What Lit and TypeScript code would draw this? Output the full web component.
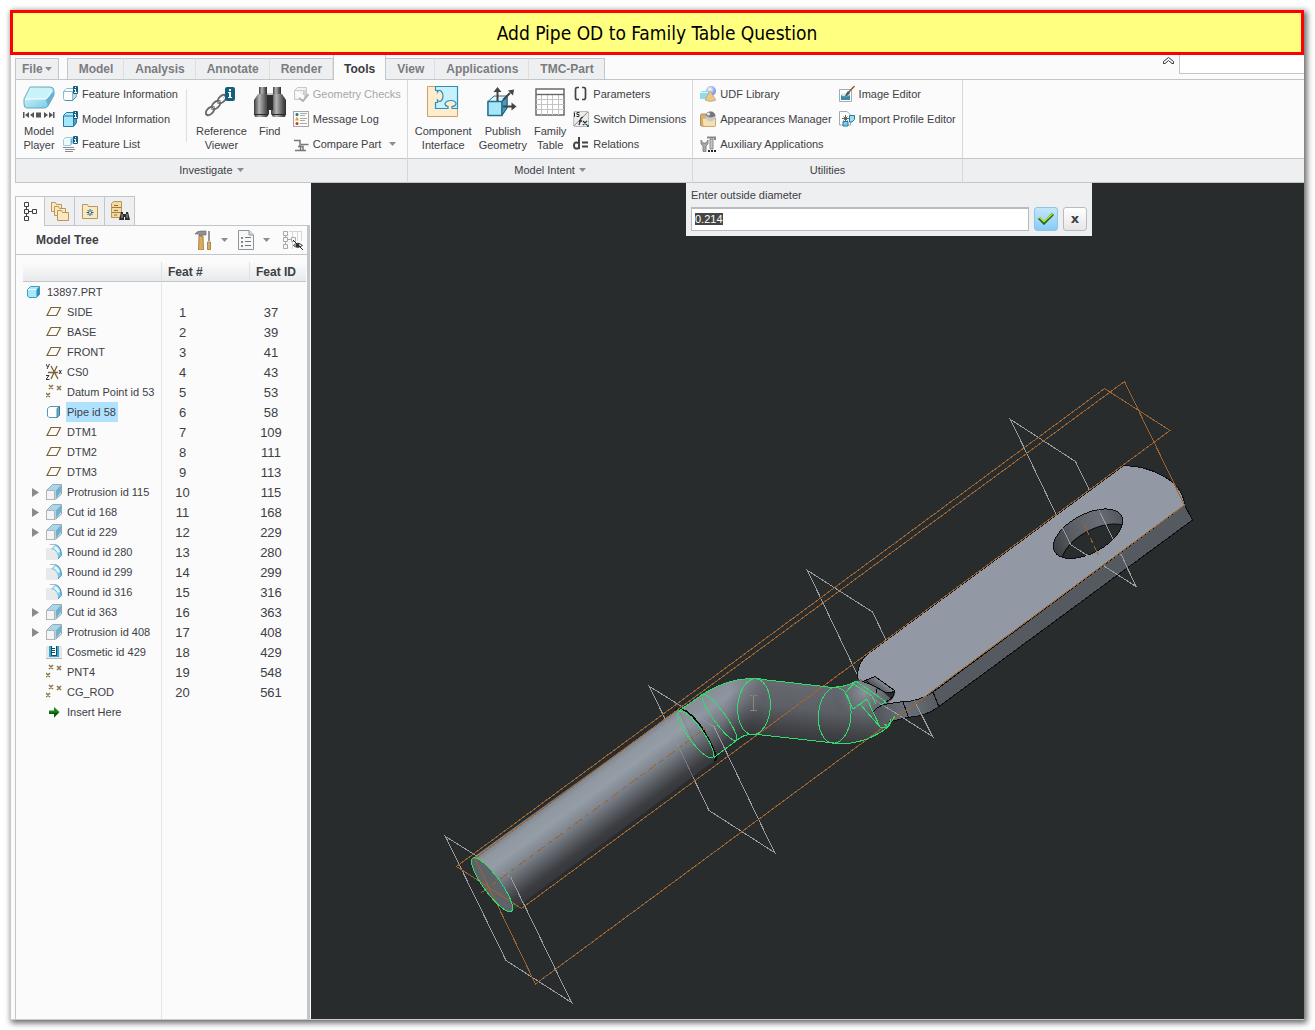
import { LitElement, html, svg, css, nothing } from "lit";
import type { SVGTemplateResult, TemplateResult } from "lit";
import { customElement, property, query, state } from "lit/decorators.js";
import { classMap } from "lit/directives/class-map.js";

/* ---------- icons ---------- */

const infoBadge = (x: number, y: number) => svg`
  <rect x=${x} y=${y} width="5" height="8" rx="1" fill="#15607f"></rect>
  <path d=${`M${x + 2} ${y + 1}h1v1h-1zM${x + 1} ${y + 3}h2v3h1v1h-3v-1h1v-2h-1z`} fill="#fff"></path>`;

const solid = svg`
  <path d="M1.500 5.500V12.500Q1.500 14.500 3.500 14.500H10.500L14.500 10.500V2.500H5.500Z" fill="#fff"></path>
  <path d="M10.500 14.500V5.500L14.500 2.500V10.500Z" fill="#b9dcec"></path>
  <path d="M1.500 5.500L4.500 2.500H14.500M10.500 14.500L14.500 10.500V2.500L10.500 5.500V14.500H3.500Q1.500 14.500 1.500 12.500V5.500H10.500" fill="none" stroke="#8dbccf"></path>
  <path d="M3 14.500H10.500L14.500 10.500" fill="none" stroke="#4a93b4"></path>`;

const cubeFeature = svg`
  <path d="M0.500 6.500L6.500 0.500H15.500V10.500L9.500 15.500H0.500Z" fill="#f1f5f7"></path>
  <path d="M1 6L6 1H15L10 6Z" fill="#a8d6ea"></path>
  <path d="M9.500 6.500L15.500 0.500V10L9.500 15.500Z" fill="#6fb1cf"></path>
  <path d="M10 14.500L15 8V10L10 15Z" fill="#c9ebf8"></path>
  <rect x="0.500" y="6.500" width="8" height="9" fill="#f4f4f4" stroke="#b4b4b4"></rect>
  <path d="M1 6L6.500 0.500H15.500V10L9.500 15.500" fill="none" stroke="#9aa9b1"></path>`;

const ICONS: Record<string, SVGTemplateResult> = {
  featureInfo: svg`${solid}${infoBadge(11, 0)}`,
  modelInfo: svg`
    <path d="M1.500 4.500L4.500 1.500H14.500V11.500L11.500 15.500H1.500Z" fill="#a5e6fa" stroke="#1f7ca6"></path>
    <path d="M11.500 15V5L14.500 2V11.500Z" fill="#48a3c6" stroke="#1f7ca6"></path>
    <path d="M1.500 5H11.500" stroke="#1f7ca6"></path>${infoBadge(11, 0)}`,
  featureList: svg`
    <path d="M1.500 3.500L3.500 1.500H10.500V7L8.500 9.500H1.500Z" fill="#eef9fc" stroke="#9ccbdd"></path>
    <path d="M8.500 9V3.500L10 2V7Z" fill="#5fb3d2"></path>
    ${infoBadge(11, 0)}
    <path d="M1 11.500H12M3 13.500H13M3 15.500H11" stroke="#8b8b8b"></path>`,
  modelPlayer: svg`
    <defs><linearGradient id="mp" x1="0" y1="0" x2="1" y2="1">
      <stop offset="0" stop-color="#e8fbff"></stop><stop offset="1" stop-color="#6cc8e4"></stop></linearGradient></defs>
    <path d="M7 1H27Q31 1 31 5V9L25 20Q24 22 21 22H4Q1 22 1 18V13Z" fill="url(#mp)" stroke="#6ba8bd"></path>
    <path d="M8 2H27Q30 2 28 6L24 13H2Z" fill="#c9f2fb"></path>
    <path d="M2 13H21Q24 13 25 11L29 4" stroke="#fff" fill="none"></path>
    <path d="M31 5V9L25 20L23 14Z" fill="#68b0cb"></path>
    <path d="M0 26h1.500v6H0zM6 26v6l-4-3zM11 26v6l-4-3zM13 26.500h5v5h-5zM21 26v6l4-3zM26 26v6l4-3zM30 26h1.500v6H30z" fill="#555"></path>`,
  reference: svg`
    <g fill="none" stroke="#6b6b6b" stroke-width="2">
      <ellipse cx="5" cy="25" rx="5" ry="3" transform="rotate(-45 5 25)"></ellipse>
      <ellipse cx="11" cy="19" rx="5" ry="3" transform="rotate(-45 11 19)"></ellipse>
      <ellipse cx="17" cy="13" rx="5" ry="3" transform="rotate(-45 17 13)"></ellipse>
    </g>
    <path d="M6 24l4-4M12 18l4-4M18 12l3-3" stroke="#bbb" stroke-width="1"></path>
    <rect x="20" y="1" width="10" height="14" rx="2" fill="#15607f"></rect>
    <path d="M24 3h2v2h-2zM23 6h3v5h1v1h-4v-1h1v-4h-1z" fill="#fff"></path>`,
  find: svg`
    <defs><linearGradient id="bn" x1="0" x2="1"><stop offset="0" stop-color="#3b3b3b"></stop>
      <stop offset=".35" stop-color="#b5b5b5"></stop><stop offset=".75" stop-color="#5c5c5c"></stop><stop offset="1" stop-color="#2c2c2c"></stop></linearGradient></defs>
    <rect x="5" y="1" width="8" height="7" fill="url(#bn)"></rect><rect x="19" y="1" width="8" height="7" fill="url(#bn)"></rect>
    <path d="M4 8H13L15 12V28L13 31H1L0 28V14Z" fill="url(#bn)"></path>
    <path d="M28 8H19L17 12V28L19 31H31L32 28V14Z" fill="url(#bn)"></path>
    <rect x="13" y="9" width="6" height="15" fill="#2f2f2f"></rect><path d="M13 8h6" stroke="#999"></path>
    <path d="M0 28.500H14M18 28.500H32" stroke="#2a2a2a"></path>`,
  geometry: svg`
    <path d="M1.500 4.500L4.500 1.500H13.500V9M1.500 4.500V13.500H6M1.500 4.500H10.500V9" fill="#f4f4f4" stroke="#c8c8c8"></path>
    <path d="M11 5L13.500 2V10L11 12Z" fill="#d2d2d2"></path>
    <path d="M6 12l4 3L15.500 8" stroke="#b0b0b0" stroke-width="2" fill="none"></path>`,
  message: svg`
    <rect x=".5" y=".5" width="15" height="15" fill="#fafafa" stroke="#a5a5a5"></rect>
    <circle cx="4" cy="3.500" r="1.500" fill="#1d7597"></circle><path d="M2 9.500l2-4 2 4z" fill="#e5a21c"></path>
    <circle cx="4" cy="12.500" r="1.500" fill="#c33b2b"></circle>
    <path d="M7 2.500h7M7 4.500h5M7 7.500h7M7 9.500h5M7 12.500h7" stroke="#aaa"></path>`,
  compare: svg`
    <path d="M1 4.500h6v6M2 14.500h11M7.500 10V14M5 10.500h5v4M8 8.500h7.500" fill="none" stroke="#777" stroke-width="1.500"></path>`,
  component: svg`
    <path d="M.5 .5H30.500V30.500H.5Z" fill="#fdecce" stroke="#c9a465"></path>
    <path d="M8.500 .5H30.500V22.500H25V20.500Q29 20 29 17.500Q28.500 14.500 24 14.500T18 17.500Q18 20 21 20.500V22.500H8.500V16.500H10.500V14Q12.500 16.500 14.500 14.500Q16 13 16 10T14 5Q12 3.500 10.500 6V4.500H8.500Z" fill="#c8f1fd" stroke="#2e8fb6" stroke-width="1.200"></path>`,
  publish: svg`
    <path d="M1 15.500L7 10H20V22L15 29.500H1Z" fill="#dff7fd" stroke="#2d6d87"></path>
    <path d="M1 15.500H15V29.500H1Z" fill="#a4e7fa" stroke="#2d6d87" stroke-width="1.400"></path>
    <path d="M15 15L20 10V22L15 29Z" fill="#3e9fc8" stroke="#23576c"></path>
    <path d="M10.500 15V4M16 14L23 7M16 20.500H25" stroke="#444" stroke-width="2"></path>
    <path d="M10.500 1l4 5h-8zM27 3.500l-1 6-5-5zM29.500 20.500l-5 4v-8z" fill="#444"></path>`,
  family: svg`
    <rect x="1" y="3" width="28" height="26" fill="#fff" stroke="#5f5f5f" stroke-width="1.400"></rect>
    <path d="M1 13.500H29M1 18.500H29M1 23.500H29M6.500 9V29M12.500 9V29M17.500 9V29M23.500 9V29" stroke="#c4c4c4"></path>
    <path d="M1 8.500H29" stroke="#666" stroke-width="1.400"></path>`,
  parameters: svg`<path d="M6 1.500H4Q2.500 1.500 2.500 4V11Q2.500 13.500 4 13.500H6M9 1.500H11Q12.500 1.500 12.500 4V11Q12.500 13.500 11 13.500H9" fill="none" stroke="#444" stroke-width="1.700"></path>`,
  switchDim: svg`
    <path d="M.5 15L15 .5H1ZM15.500 1V15.500H1" fill="#ececec" stroke="#b9b9b9"></path>
    <path d="M1.500 1.500V6M6.500 1.500H4V3.500H6V5.500H3.500" stroke="#333" fill="none"></path>
    <path d="M1 15L15 1" stroke="#999"></path>
    <path d="M10 6.500Q8 6 7.500 9L6 14M6 10h3M10 10l4 4M14 10l-4 4" stroke="#333" stroke-width="1.300" fill="none"></path>
    <rect x="14" y="14" width="2" height="2" fill="#13708f"></rect>`,
  relations: svg`<path d="M6 1V13M6 7Q1 5 1 9.500T6 12M9 6.500h6M9 10.500h6" fill="none" stroke="#444" stroke-width="2"></path>`,
  udf: svg`
    <defs><radialGradient id="ub" cx=".4" cy=".35"><stop offset="0" stop-color="#fff"></stop><stop offset="1" stop-color="#8b9be0"></stop></radialGradient></defs>
    <circle cx="11" cy="5" r="5" fill="url(#ub)"></circle>
    <path d="M0 6.500L2 5H9V13H0Z" fill="#8fdbea"></path><path d="M0 6.500H8" stroke="#d9f6fb"></path>
    <path d="M10 5L16 14Q11 17 5 14Z" fill="#e8c98c" stroke="#b6935a" stroke-width=".6"></path>`,
  appearance: svg`
    <path d="M.5 4.500Q.5 3 2 3H6V15H2Q.5 15 .5 14Z" fill="#d6b06c" stroke="#b08c4d"></path>
    <path d="M2 7H15.500V14.500Q15.500 15.500 14 15.500H3Z" fill="#f5e0b5" stroke="#cda763"></path>
    <circle cx="10.500" cy="5.500" r="5" fill="#c9c9c9"></circle><path d="M6 4.500Q10 8 15.500 5Q14.500 0 10 .5Q6 1 6 4.500Z" fill="#777"></path>
    <circle cx="8.500" cy="3" r="1.500" fill="#eee"></circle>`,
  auxiliary: svg`
    <path d="M1 4v4l2 2v5.500h3V10l2-2V4L6 7H3Z" fill="#aaa" stroke="#777" stroke-width=".8"></path>
    <path d="M7 1.500H15V4" stroke="#888" stroke-width="2" fill="none"></path>
    <path d="M10 3h3v10h-3z" fill="#c5c5c5" stroke="#777" stroke-width=".8"></path>
    <path d="M8 14h2v2H8zM11 14h2v2h-2zM14 14h2v2h-2z" fill="#222"></path>`,
  image: svg`
    <path d="M.5 3.500H12.500V15.500H.5Z" fill="#fff" stroke="#a9a9a9"></path>
    <path d="M2 9H11V14H2Z" fill="#3d89ab"></path><path d="M2 9Q6 12 11 9V6L2 8Z" fill="#cdeaf5"></path>
    <path d="M15.500 0L9 7" stroke="#8b5a3c" stroke-width="1.500"></path><path d="M9 5l2 2-3 3-3 1q2-2 2-3z" fill="#555"></path>`,
  profile: svg`
    <path d="M.5 .5H8L11.500 4V14H.5Z" fill="#fff" stroke="#a9a9a9"></path>
    <path d="M3 7.500h7M6.500 4v7M4.500 5.500l4 4M8.500 5.500l-4 4" stroke="#555" stroke-width=".9"></path>
    <path d="M10.500 4.500h5v4L13 11h-2.500z" fill="#9edcf1" stroke="#1f7ca6"></path><path d="M4 10.500h5V15H4z" fill="#7ccbe8" stroke="#1f7ca6"></path>`,
  tabTree: svg`<path d="M2.500 .5h4v4h-4zM2.500 7.500h4v4h-4zM2.500 14.500h4v4h-4zM10.500 7.500h4v4h-4zM4.500 4.500v3M4.500 11.500v3M6.500 9.500h4" fill="none" stroke="#3e3e3e"></path>`,
  tabFolders: svg`
    <g fill="#fbe8c3" stroke="#bd9655"><path d="M1.500 1.500h4l1 2h5v7h-10z"></path><path d="M4.500 5.500h4l1 2h6v7h-11z"></path><path d="M7.500 9.500h4l1 2h6v8h-11z"></path></g>`,
  tabFav: svg`<path d="M1.500 3.500h5l1 2h9v12h-15z" fill="#fbe8c3" stroke="#bd9655"></path>
    <path d="M9 8v7M5.500 11.500h7M6.500 9l5 5M11.500 9l-5 5" stroke="#17607f"></path><circle cx="9" cy="11.500" r="1" fill="#fff"></circle>`,
  tabSearch: svg`<path d="M1.500 2.500L3.500 .5h8v14l-1 2h-9z" fill="#f3d9a4" stroke="#bd9655"></path>
    <path d="M2 6.500h9M2 11.500h9" stroke="#a47e3c"></path><path d="M4 4.500h4M4 9.500h4M4 14h3" stroke="#94702f"></path>
    <path d="M11 11h2v2h3v-2h2l2 8h-5v-3h-1v3H9z" fill="#2d2d2d"></path><path d="M12 13v4M17 13v4" stroke="#aaa"></path>`,
  tools: svg`
    <path d="M0 4Q2 1 6 1h5v4H7v1H4V4Z" fill="#8f9296" stroke="#5f6266" stroke-width=".6"></path>
    <path d="M4 6h4l.5 14h-5z" fill="#dcab5f" stroke="#9c7435" stroke-width=".8"></path>
    <path d="M14 1v10" stroke="#777" stroke-width="1.500"></path><path d="M12.500 12h3v7.500h-3z" fill="#dcab5f" stroke="#9c7435" stroke-width=".8"></path>`,
  list: svg`<path d="M.5 .5H11L15.500 5V19.500H.5Z" fill="#f6f7f8" stroke="#8e9499"></path><path d="M11 .5V5h4.500" fill="#d6dadd" stroke="#8e9499"></path>
    <path d="M7 7.500h6M7 11.500h6M7 15.500h6" stroke="#777"></path><path d="M3 7h2v2H3zM3 11h2v2H3zM3 15h2v2H3z" fill="#888"></path>`,
  hideTree: svg`<path d="M.5 1.500h4v4h-4zM.5 7.500h4v4h-4zM.5 14.500h4v4h-4zM8.500 7.500h4v4h-4zM2.500 5.500v2M2.500 11.500v3M4.500 9.500h4" fill="none" stroke="#a8a8a8"></path>
    <path d="M6 1.500h13M9.500 2v5M14.500 2v9M18.500 2v9M9.500 12v7" stroke="#d5d5d5"></path>
    <path d="M10.500 15.500Q14.500 11 19.500 15.500Q14.500 19 10.500 15.500Z" fill="#fff" stroke="#333"></path><circle cx="14.500" cy="15.500" r="2" fill="#333"></circle>
    <path d="M10 10l10 10" stroke="#222"></path>`,
  part: svg`<path d="M1.500 5.500L4.500 2.500H13.500V10.500L10.500 13.500H3L1.500 12Z" fill="#a8e8fb" stroke="#3c9dc3"></path>
    <path d="M10.500 13V5.500L13.500 2.500V10.500Z" fill="#2f8fba"></path><path d="M2 5.500H10.500" stroke="#e9fbff"></path>`,
  plane: svg`<path d="M5 3.500H14.500L10.500 11.500H1Z" fill="none" stroke="#7d6233" stroke-width="1.200"></path>`,
  csys: svg`<path d="M5 2l7 13M11 2L5 15M2 8.500h10" stroke="#7d6233" stroke-width="1.300"></path>
    <path d="M0 0l1.500 3M3.500 0L1 5M0 11.500h3l-3 4h3.500M13 6l2.500 4M15.500 6L13 10" stroke="#333" fill="none"></path>`,
  points: svg`<path d="M3 1l4 4M7 1l-4 4M11 2l4 4M15 2l-4 4M0 9l4 4M4 9l-4 4" stroke="#8c7448" stroke-width="1.500"></path>`,
  pipe: svg`<path d="M1.500 4.500L4 2.500H13.500V11L11 13.500H3L1.500 12Z" fill="#fff" stroke="#4d9ab9"></path>
    <path d="M11 13.500V4.500L13.500 2.500V11Z" fill="#6bb5d4" stroke="#2b6f8d" stroke-width=".8"></path>`,
  cube: cubeFeature,
  round: svg`
    <path d="M0 4H6Q12 6 12 16H0Z" fill="#e9e9e9"></path>
    <path d="M5 5L9 1Q15 2 15.500 11L12 15Q12 6 5 5Z" fill="#7cc8e8"></path>
    <path d="M7 4L10 2Q13 4 14 8L12 9Q10 5 7 4Z" fill="#e2f5fd"></path>
    <path d="M9 .5Q15 2 15.500 11M12 15L15.500 11" stroke="#3f8db0" fill="none"></path>
    <path d="M4 .5H10" stroke="#b4b4b4"></path>`,
  cosmetic: svg`<rect x="0" y="2" width="16" height="12" fill="#e6e6e6"></rect><path d="M3 2h10v11H3z" fill="#35a6cd"></path>
    <path d="M6 2h4v9H6z" fill="#fff"></path><path d="M5.500 2v9.500h5V2M6 4.500h3M6 6.500h3M6 8.500h3" fill="none" stroke="#0f4d66"></path><path d="M0 14.500h16" stroke="#b9b9b9"></path>`,
  insert: svg`<path d="M3 6.500h5V3l5.500 5L8 13.500V10H3Z" fill="#0c8a12"></path><path d="M3 8.500h10L8 13.500V10H3Z" fill="#174f1a"></path>`,
};

const icon = (name: string, w = 16, h = w) =>
  html`<svg class="icon" width=${w} height=${h} viewBox=${`0 0 ${w} ${h}`} aria-hidden="true">${ICONS[name]}</svg>`;

const caret = html`<svg class="caret" width="7" height="4" viewBox="0 0 7 4" aria-hidden="true"><path d="M0 0H7L3.500 4Z" fill="#8a8c8f"></path></svg>`;

const shared = css`
  * { box-sizing: border-box; }
  button {
    border: 0; padding: 0; margin: 0; background: none; font: inherit; color: inherit; cursor: default;
  }
  svg { display: block; flex: none; }
`;

/* ---------- ribbon ---------- */

interface Command { icon: string; label: string; disabled?: boolean; menu?: boolean }

const TABS = ["Model", "Analysis", "Annotate", "Render", "Tools", "View", "Applications", "TMC-Part"];

@customElement("ribbon-bar")
class RibbonBar extends LitElement {
  static styles = [shared, css`
    :host { display: block; color: #3d4045; font: 11px/14px "Liberation Sans", Arial, sans-serif; }
    .tabs {
      display: flex; align-items: flex-end; height: 25px; margin-left: 4px;
      border-bottom: 1px solid #c3c6c9; font-size: 12px; font-weight: bold; color: #7a7c80;
    }
    .tab, .file {
      display: flex; align-items: center; gap: 3px; height: 21px; padding: 0 10px 0 11px;
      background: #eeeff1; border-top: 1px solid #c3c6c9; border-right: 1px solid #dcdee0;
    }
    .file { gap: 2px; padding: 0 6px; border-left: 1px solid #c3c6c9; border-right-color: #c3c6c9; margin-right: 8px; }
    .tab:first-child { border-left: 1px solid #c3c6c9; }
    .tab:last-child { border-right-color: #c3c6c9; }
    .strip { display: flex; align-items: flex-end; }
    .tab.active {
      height: 25px; margin-bottom: -1px; padding: 2px 10px 0; background: #fbfbfb; color: #3a3b3d;
      border-top: 0; border-left: 1px solid #c3c6c9; border-right-color: #c3c6c9;
    }
    .spacer { flex: 1; }
    .collapse { align-self: flex-start; margin: 2px 5px 0 0; }
    .searchbox { align-self: flex-start; width: 125px; height: 19px; background: #fff; border: solid #c3c6c9; border-width: 0 0 1px 1px; }
    .groups { display: flex; margin-left: 4px; border-left: 1px solid #c3c6c9; }
    .group { display: flex; flex-direction: column; border-right: 1px solid #d5d8da; }
    .rest { flex: 1; border-right: 0; }
    .body { display: flex; gap: 7px; height: 78px; padding: 1px 6px 0 7px; }
    .title {
      display: flex; align-items: center; justify-content: center; gap: 4px; height: 25px; padding-bottom: 1px;
      background: #eeeff1; border: solid #c3c6c9; border-width: 1px 0;
    }
    .column { display: flex; flex-direction: column; }
    .command { display: flex; align-items: center; gap: 4px; height: 25px; white-space: nowrap; text-align: left; }
    .command .caret { margin-left: 4px; }
    .command:disabled { color: #a5a7aa; }
    .big { display: flex; flex-direction: column; align-items: center; gap: 6px; padding-top: 5px; text-align: center; white-space: pre-line; align-self: flex-start; }
    .rule { width: 1px; margin: 8px 2px 16px 1px; background: #dcdee0; }
  `];

  private command(c: Command) {
    return html`<button class="command" ?disabled=${c.disabled}>
      ${icon(c.icon)}<span>${c.label}</span>${c.menu ? caret : nothing}
    </button>`;
  }

  private column(...items: Command[]) {
    return html`<div class="column">${items.map((c) => this.command(c))}</div>`;
  }

  private big(name: string, label: string, width = 32) {
    return html`<button class="big">${icon(name, width, 32)}<span>${label}</span></button>`;
  }

  private group(title: string, menu: boolean, content: TemplateResult) {
    return html`<section class="group" aria-label=${title}>
      <div class="body">${content}</div>
      <div class="title"><span>${title}</span>${menu ? caret : nothing}</div>
    </section>`;
  }

  render() {
    return html`
      <nav class="tabs" aria-label="Ribbon">
        <button class="file"><span>File</span>${caret}</button>
        <div class="strip">
          ${TABS.map((t) => html`<button class=${classMap({ tab: true, active: t === "Tools" })}>${t}</button>`)}
        </div>
        <div class="spacer"></div>
        <button class="collapse" aria-label="Minimize the ribbon">
          <svg width="11" height="7" viewBox="0 0 11 7"><path d="M.5 4.500L5.500 .5L10.500 4.500V6.500H9L5.500 3.500L2 6.500H.5Z" fill="#fff" stroke="#333"></path></svg>
        </button>
        <div class="searchbox"></div>
      </nav>
      <div class="groups">
        ${this.group("Investigate", true, html`
          ${this.big("modelPlayer", "Model\nPlayer")}
          ${this.column(
            { icon: "featureInfo", label: "Feature Information" },
            { icon: "modelInfo", label: "Model Information" },
            { icon: "featureList", label: "Feature List" })}
          <div class="rule"></div>
          ${this.big("reference", "Reference\nViewer")}
          ${this.big("find", "Find")}
          ${this.column(
            { icon: "geometry", label: "Geometry Checks", disabled: true },
            { icon: "message", label: "Message Log" },
            { icon: "compare", label: "Compare Part", menu: true })}`)}
        ${this.group("Model Intent", true, html`
          ${this.big("component", "Component\nInterface")}
          ${this.big("publish", "Publish\nGeometry")}
          ${this.big("family", "Family\nTable", 30)}
          ${this.column(
            { icon: "parameters", label: "Parameters" },
            { icon: "switchDim", label: "Switch Dimensions" },
            { icon: "relations", label: "Relations" })}`)}
        ${this.group("Utilities", false, html`
          ${this.column(
            { icon: "udf", label: "UDF Library" },
            { icon: "appearance", label: "Appearances Manager" },
            { icon: "auxiliary", label: "Auxiliary Applications" })}
          ${this.column(
            { icon: "image", label: "Image Editor" },
            { icon: "profile", label: "Import Profile Editor" })}`)}
        <div class="group rest"><div class="body"></div><div class="title"></div></div>
      </div>`;
  }
}

/* ---------- model tree ---------- */

interface Feature { icon: string; name: string; num?: number; id?: number; expandable?: boolean }

const FEATURES: Feature[] = [
  { icon: "plane", name: "SIDE", num: 1, id: 37 },
  { icon: "plane", name: "BASE", num: 2, id: 39 },
  { icon: "plane", name: "FRONT", num: 3, id: 41 },
  { icon: "csys", name: "CS0", num: 4, id: 43 },
  { icon: "points", name: "Datum Point id 53", num: 5, id: 53 },
  { icon: "pipe", name: "Pipe id 58", num: 6, id: 58 },
  { icon: "plane", name: "DTM1", num: 7, id: 109 },
  { icon: "plane", name: "DTM2", num: 8, id: 111 },
  { icon: "plane", name: "DTM3", num: 9, id: 113 },
  { icon: "cube", name: "Protrusion id 115", num: 10, id: 115, expandable: true },
  { icon: "cube", name: "Cut id 168", num: 11, id: 168, expandable: true },
  { icon: "cube", name: "Cut id 229", num: 12, id: 229, expandable: true },
  { icon: "round", name: "Round id 280", num: 13, id: 280 },
  { icon: "round", name: "Round id 299", num: 14, id: 299 },
  { icon: "round", name: "Round id 316", num: 15, id: 316 },
  { icon: "cube", name: "Cut id 363", num: 16, id: 363, expandable: true },
  { icon: "cube", name: "Protrusion id 408", num: 17, id: 408, expandable: true },
  { icon: "cosmetic", name: "Cosmetic id 429", num: 18, id: 429 },
  { icon: "points", name: "PNT4", num: 19, id: 548 },
  { icon: "points", name: "CG_ROD", num: 20, id: 561 },
  { icon: "insert", name: "Insert Here" },
];

@customElement("model-tree")
class ModelTree extends LitElement {
  static styles = [shared, css`
    :host { display: flex; flex-direction: column; padding: 13px 1px 0 4px; color: #3d4045; font: 11px/14px "Liberation Sans", Arial, sans-serif; }
    .tabs { display: flex; height: 29px; position: relative; }
    .tab {
      display: flex; align-items: center; justify-content: center; width: 30px;
      background: #eeeff1; border: solid #c3c6c9; border-width: 1px 1px 0 0;
    }
    .tab.active { background: #fbfbfb; border-left-width: 1px; margin-bottom: -1px; z-index: 1; }
    .panel { flex: 1; display: flex; flex-direction: column; border: solid #c3c6c9; border-width: 1px 3px 0 1px; }
    .heading { display: flex; align-items: center; height: 29px; padding: 0 4px 0 20px; border-bottom: 1px solid #c3c6c9; }
    .heading h2 { flex: 1; margin: 0; font-size: 12px; }
    .tool { display: flex; align-items: center; gap: 9px; margin-right: 10px; }
    .tool.last { margin: 0 0 0 3px; }
    .scroll { flex: 1; display: flex; flex-direction: column; padding: 7px 1px 0 7px; }
    .scroll::after { content: ""; flex: 1; margin-left: 138px; border-left: 1px solid #e4e6e8; }
    table { width: 100%; border-collapse: separate; border-spacing: 0; table-layout: fixed; }
    col.name { width: 138px; } col.num { width: 88px; }
    th { height: 20px; padding: 0 0 0 6px; text-align: left; font-size: 12px; background: linear-gradient(#fbfbfb, #e8eaec); border-bottom: 1px solid #c3c6c9; }
    th + th { border-left: 1px solid #e0e2e4; }
    td { height: 20px; padding: 0; white-space: nowrap; }
    td.value { font-size: 13px; text-align: center; padding-top: 1px; }
    td.num { padding-right: 46px; border-left: 1px solid #e4e6e8; }
    td.id { padding-right: 13px; }
    .node { display: flex; align-items: center; gap: 4px; height: 20px; padding-left: 3px; }
    .twist { display: flex; align-items: center; width: 11px; height: 20px; }
    .child { padding-left: 8px; }
    .label { padding: 3px 2px 3px 1px; }
    .label.selected { background: #b0e2ff; }
  `];

  @state() private selected = "Pipe id 58";

  private row(f: Feature) {
    return html`<tr>
      <td><div class="node child">
        ${f.expandable
          ? html`<button class="twist" aria-label=${`Expand ${f.name}`}><svg width="8" height="9" viewBox="0 0 8 9"><path d="M1 0L8 4.500L1 9Z" fill="#8b8b8b"></path></svg></button>`
          : html`<span class="twist"></span>`}
        ${icon(f.icon)}
        <span class=${classMap({ label: true, selected: f.name === this.selected })} @click=${() => (this.selected = f.name)}>${f.name}</span>
      </div></td>
      <td class="value num">${f.num ?? ""}</td>
      <td class="value id">${f.id ?? ""}</td>
    </tr>`;
  }

  render() {
    return html`
      <div class="tabs" role="group" aria-label="Navigator">
        <button class="tab active" aria-label="Model Tree">${icon("tabTree", 17, 20)}</button>
        <button class="tab" aria-label="Folders">${icon("tabFolders", 20)}</button>
        <button class="tab" aria-label="Favorites">${icon("tabFav", 18, 20)}</button>
        <button class="tab" aria-label="Search">${icon("tabSearch", 20)}</button>
      </div>
      <div class="panel">
        <div class="heading">
          <h2>Model Tree</h2>
          <button class="tool" aria-label="Settings">${icon("tools", 17, 20)}${caret}</button>
          <button class="tool" aria-label="Show">${icon("list", 16, 20)}${caret}</button>
          <button class="tool last" aria-label="Hide tree">${icon("hideTree", 20)}</button>
        </div>
        <div class="scroll">
          <table aria-label="Model Tree">
            <colgroup><col class="name"><col class="num"><col></colgroup>
            <thead><tr><th></th><th>Feat #</th><th>Feat ID</th></tr></thead>
            <tbody>
              <tr>
                <td><div class="node">${icon("part")}<span class="label">13897.PRT</span></div></td>
                <td class="value num"></td><td class="value id"></td>
              </tr>
              ${FEATURES.map((f) => this.row(f))}
            </tbody>
          </table>
        </div>
      </div>`;
  }
}

/* ---------- graphics window ---------- */

const BODY = "M679 711L703 694Q727 679 750 678.500Q758 678 767 680L820 686Q842 690 856 681L870 680L892 700L895 716L888 727Q866 744 840 743.700L757 734.500Q745 733 737 740L714 757.500Q705 758 692 738Z";

@customElement("graphics-view")
class GraphicsView extends LitElement {
  static styles = [shared, css`
    :host { display: block; position: relative; background: #282c2d; overflow: hidden; }
    .scene { width: 100%; height: 100%; position: absolute; }
    .scene .line { fill: none; shape-rendering: crispEdges; }
    .scene .datum { stroke: #9a9ca0; }
    .scene .faint { opacity: .5; }
    .scene .active-plane { stroke: #9c6430; }
    .scene .pick { stroke: #2fdc6c; }
    .scene .edge { stroke: #0c0d0e; }
    .prompt {
      position: absolute; left: 375px; top: 0; width: 406px; padding: 5px; background: #eeeff1;
      color: #3d4045; font: 11px/14px "Liberation Sans", Arial, sans-serif;
    }
    label { display: block; margin-bottom: 5px; }
    .fields { display: flex; gap: 5px; }
    input {
      flex: 1; min-width: 0; height: 24px; padding: 0 3px 2px; border: 1px solid #b9bcbf; border-top-width: 2px; outline: 0;
      background: #fff; font: inherit; color: #222;
    }
    input::selection { background: #454545; color: #fff; }
    .key {
      display: flex; align-items: center; justify-content: center; width: 24px; height: 24px;
      border: 1px solid #b9bcbf; border-radius: 3px; background: linear-gradient(#fff, #e6e6e6); font: bold 13px/18px "DejaVu Sans", sans-serif;
    }
    .key.ok { background: linear-gradient(#c4e6fb, #86cbf8); border-color: #8fc4e4; }
  `];

  @property() value = "0.214";
  @query("input") private field!: HTMLInputElement;

  firstUpdated() {
    this.field.focus();
    this.field.select();
  }

  private scene() {
    return html`<svg class="scene" viewBox="311 183 993 836" preserveAspectRatio="xMinYMin meet" role="img" aria-label="Pipe with flattened end">
      <defs>
        <linearGradient id="rod" gradientUnits="userSpaceOnUse" x1="475" y1="856" x2="513" y2="908">
          <stop offset="0" stop-color="#7b828a"></stop><stop offset=".12" stop-color="#8f97a0"></stop>
          <stop offset=".3" stop-color="#959da7"></stop><stop offset=".5" stop-color="#7f868f"></stop>
          <stop offset=".75" stop-color="#54575d"></stop><stop offset=".9" stop-color="#3b3d41"></stop><stop offset="1" stop-color="#36383b"></stop>
        </linearGradient>
        <linearGradient id="bend" gradientUnits="userSpaceOnUse" x1="700" y1="695" x2="734" y2="742">
          <stop offset="0" stop-color="#868d97"></stop><stop offset=".3" stop-color="#8f96a1"></stop>
          <stop offset=".55" stop-color="#757a83"></stop><stop offset=".9" stop-color="#404246"></stop><stop offset="1" stop-color="#36383b"></stop>
        </linearGradient>
        <linearGradient id="mid" gradientUnits="userSpaceOnUse" x1="798" y1="682" x2="792" y2="740">
          <stop offset="0" stop-color="#676a70"></stop><stop offset=".45" stop-color="#5c5f65"></stop>
          <stop offset=".8" stop-color="#414347"></stop><stop offset="1" stop-color="#36383b"></stop>
        </linearGradient>
        <linearGradient id="fade" gradientUnits="userSpaceOnUse" x1="728" y1="700" x2="766" y2="706">
          <stop offset="0" stop-color="#fff"></stop><stop offset="1" stop-color="#000"></stop>
        </linearGradient>
        <mask id="left" maskUnits="userSpaceOnUse" x="660" y="660" width="260" height="110"><rect x="660" y="660" width="260" height="110" fill="url(#fade)"></rect></mask>
        <radialGradient id="glow" gradientUnits="userSpaceOnUse" cx="864" cy="692" r="34">
          <stop offset="0" stop-color="#8b929b"></stop><stop offset=".5" stop-color="#6d7178" stop-opacity=".8"></stop><stop offset="1" stop-color="#505358" stop-opacity="0"></stop>
        </radialGradient>
        <linearGradient id="wall" gradientUnits="userSpaceOnUse" x1="1054" y1="545" x2="1122" y2="520">
          <stop offset="0" stop-color="#3f4145"></stop><stop offset=".3" stop-color="#5b5e64"></stop><stop offset=".7" stop-color="#696d75"></stop><stop offset="1" stop-color="#54575d"></stop>
        </linearGradient>
        <linearGradient id="lip" gradientUnits="userSpaceOnUse" x1="873" y1="715" x2="938" y2="700">
          <stop offset="0" stop-color="#505359"></stop><stop offset=".5" stop-color="#6b6f77"></stop><stop offset="1" stop-color="#565a61"></stop>
        </linearGradient>
        <linearGradient id="notch" gradientUnits="userSpaceOnUse" x1="882" y1="680" x2="874" y2="690">
          <stop offset="0" stop-color="#8b919b"></stop><stop offset="1" stop-color="#3e4044"></stop>
        </linearGradient>
        <clipPath id="hole"><ellipse cx="1088" cy="533.700" rx="38" ry="19.500" transform="rotate(-28 1088 533.700)"></ellipse></clipPath>
      </defs>

      <path class="line datum" d="M1010.500 419.500L1075.500 461.500L1136 586.500L1070.500 544.500ZM807.500 570.500L872.500 612L932.500 736.500L867 695ZM649.500 686.500L714 726.500L774.500 852.500L709 810.500ZM445.500 836.500L511 877.500L571.500 1002.500L506 960.500Z"></path>

      <path d="M475 856L679 709Q700 714 714 748Q718 757 714 761L512 911Z" fill="url(#rod)"></path>
      <path d=${BODY} fill="url(#mid)"></path>
      <path d=${BODY} fill="url(#bend)" mask="url(#left)"></path>
      <path d=${BODY} fill="url(#glow)"></path>
      <path class="line edge" stroke-width="1.500" d="M675 709.500Q681 708 686 711Q699 720 708 738Q714 749 716 756V759L714 761"></path>

      <path d="M873 712Q879 705 887 704L903 701.500Q918 702 933 692L1184.500 505L1192.500 520L939 706.500Q925 717 908 717.300L889 722L880 727Z" fill="#555960"></path>
      <path d="M873 712Q879 705 887 704L903 701.500Q918 702 933 692L939 706.500Q925 717 908 717.300L889 722L880 727Z" fill="url(#lip)"></path>
      <path d="M1123 465.500C1152 466 1183 481 1184.500 505L933 692Q918 702 903 701.500L887 704Q896 697 895 690.500L876 677L863 681L858 678Q856 661 873 650Z" fill="#9299a5"></path>
      <path class="line edge" d="M1123 465.500C1152 466 1183 481 1184.500 505L933 692Q918 702 903 701.500L887 704Q879 705 873 712M1184.500 505L1192.500 520L939 706.500Q925 717 908 717.300L889 722M903 702L908.500 717M933 692L939 707M858 678Q856 661 873 650L1123 466"></path>
      <path d="M863 681.500L875 677L894.500 690.500L892 692.500L886 692.500Z" fill="url(#notch)"></path>
      <path class="line edge" d="M862.500 681.500L875 676.500L894.500 690.500L892 692.500H886L870 684L862.500 681.500M870 684L866 680M877 689L876 693M894.500 691Q894 698 886 702"></path>

      <g clip-path="url(#hole)">
        <rect x="1045" y="500" width="90" height="70" fill="url(#wall)"></rect>
        <ellipse cx="1096.500" cy="548.700" rx="38" ry="19.500" transform="rotate(-28 1096.500 548.700)" fill="#282c2d" stroke="#0c0d0e"></ellipse>
      </g>
      <ellipse class="line edge" cx="1088" cy="533.700" rx="38" ry="19.500" transform="rotate(-28 1088 533.700)"></ellipse>
      <path class="line datum" d="M1056 514L1070.500 544.500L1088 556M1100 513L1115 543M1121 554L1136 586.500L1104 566"></path>
      <path class="line datum faint" d="M1090 491L1121 556M1086 554L1106 567M886 641L916 704M664 716L694 779M674 702L711 725M472 853L511 877.500M872 698L887 708"></path>
      <path class="line datum" d="M711 725L714 726.500L730 760M511 877.500L524 905M916 704L932.500 736.500L886 707"></path>

      <ellipse cx="492" cy="884.700" rx="33" ry="8.500" transform="rotate(53.800 492 884.700)" fill="#5e6269"></ellipse>

      <path class="line active-plane" d="M1124.500 381.500L1184.500 505L535.500 984L475 858.500ZM1104.500 388.500L1170 430.500L521.500 908.500L456.500 866.500Z"></path>
      <path class="line active-plane" stroke-dasharray="10 4 5 4" d="M481 893L706 728M1084.500 525.500L1100.500 559.500"></path>
      <path class="line" stroke="#8c857c" d="M750 710.500H757M753.500 695V711M750 695.500H752M755 695.500H757"></path>

      <g class="line pick">
        <ellipse cx="492" cy="884.700" rx="33" ry="8.500" transform="rotate(53.800 492 884.700)"></ellipse>
        <ellipse cx="695.700" cy="734.500" rx="28.500" ry="7.500" transform="rotate(53.800 695.700 734.500)"></ellipse>
        <ellipse cx="719.500" cy="717.500" rx="28.500" ry="6" transform="rotate(53.800 719.500 717.500)"></ellipse>
        <ellipse cx="754" cy="706.700" rx="16.300" ry="28" transform="rotate(4 754 706.700)"></ellipse>
        <ellipse cx="834.700" cy="715.300" rx="16.300" ry="28" transform="rotate(4 834.700 715.300)"></ellipse>
        <path d="M679 711L703 694Q727 679 750 678.500Q758 678 767 680L820 686Q842 690 856 681L886 702L880 705M845 693L856 681M845 693L853 709L867 699L880 727M860 704L880 727M852 683L872 696L876 704M714 757.500L737 740Q745 733 757 734.500L840 743.700Q866 744 888 727L895 716M873 712L880 727L888 727L891 719M888 727L884 724"></path>
      </g>
    </svg>`;
  }

  render() {
    return html`
      ${this.scene()}
      <form class="prompt" @submit=${(e: Event) => e.preventDefault()}>
        <label for="diameter">Enter outside diameter</label>
        <div class="fields">
          <input id="diameter" type="text" .value=${this.value} autocomplete="off">
          <button class="key ok" aria-label="Accept value">
            <svg width="16" height="12" viewBox="0 0 16 12"><path d="M1 5L6 10L15 1" fill="none" stroke="#1d6b2b" stroke-width="3"></path><path d="M1 4L6 8.500L14.500 .8" fill="none" stroke="#c6e61b" stroke-width="1.400"></path></svg>
          </button>
          <button class="key" type="button" aria-label="Cancel">x</button>
        </div>
      </form>`;
  }
}

/* ---------- application shell ---------- */

@customElement("app-root")
class AppRoot extends LitElement {
  static styles = [shared, css`
    :host { display: block; background: #fff; }
    .page { display: flex; min-height: 100vh; padding: 10px 11px 10px 10px; }
    .window { flex: 1; min-width: 0; display: flex; flex-direction: column; background: #fbfbfb; box-shadow: 2px 2px 6px 1px rgba(0, 0, 0, .6); }
    h1 {
      margin: 0; height: 45px; padding-top: 2px; border: 3px solid #f00; background: #ffff80; color: #000; text-align: center;
      font: 19px/37px "DejaVu Sans Condensed", "DejaVu Sans", sans-serif;
    }
    .frame { flex: 1; display: flex; flex-direction: column; border: solid #c9cbcd; border-width: 0 0 1px 1px; }
    .work { flex: 1; display: flex; }
    model-tree { width: 300px; }
    graphics-view { flex: 1; }
  `];

  render() {
    return html`
      <div class="page">
        <div class="window">
          <h1>Add Pipe OD to Family Table Question</h1>
          <div class="frame">
            <ribbon-bar></ribbon-bar>
            <div class="work">
              <model-tree></model-tree>
              <graphics-view></graphics-view>
            </div>
          </div>
        </div>
      </div>`;
  }
}
